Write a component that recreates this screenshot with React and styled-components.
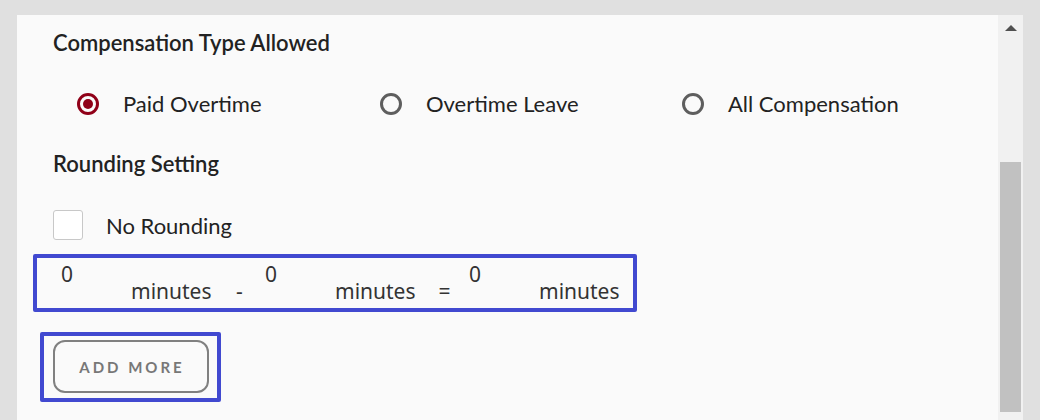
import styled, { createGlobalStyle } from 'styled-components';

const GlobalStyle = createGlobalStyle`
  html, body {
    margin: 0;
    height: 420px;
    overflow: hidden;
    background: #e0e0e0;
    font-family: Lato, "Liberation Sans", sans-serif;
  }
`;

const Frame = styled.div`
  padding: 15px 17px 0 17px;
  height: 405px;
`;

const Panel = styled.div`
  display: flex;
  height: 100%;
  background: #fafafa;
`;

const Content = styled.div`
  flex: 1;
  padding: 15px 0 0 36px;
`;

const Heading = styled.h3`
  margin: 0;
  font-size: 22px;
  line-height: 26px;
  font-weight: 600;
  color: #222;
`;

const RadioGroup = styled.div`
  display: grid;
  grid-template-columns: 303px 302px 300px;
  margin: 35px 0 34px 24px;
`;

const RadioOption = styled.label`
  display: flex;
  align-items: center;
  font-size: 22px;
  line-height: 26px;
  color: #222;
`;

const RadioCircle = styled.span`
  box-sizing: border-box;
  width: 22px;
  height: 22px;
  border-radius: 50%;
  border: 3px solid ${(p) => (p.$checked ? '#900018' : '#5e5e5e')};
  margin-right: 24px;
  display: flex;
  align-items: center;
  justify-content: center;
  &::after {
    content: '';
    width: 10px;
    height: 10px;
    border-radius: 50%;
    background: ${(p) => (p.$checked ? '#900018' : 'transparent')};
  }
`;

const CheckRow = styled.label`
  display: flex;
  align-items: center;
  margin-top: 33px;
  font-size: 22px;
  color: #222;
`;

const CheckBox = styled.span`
  box-sizing: border-box;
  width: 30px;
  height: 30px;
  border: 1px solid #c8c8c8;
  border-radius: 3px;
  background: #fff;
  margin-right: 23px;
`;

const Highlight = styled.div`
  box-sizing: border-box;
  border: 4px solid #4149d0;
  border-radius: 2px;
  margin-left: ${(p) => p.$offset}px;
  width: ${(p) => p.$width}px;
`;

const RangeRow = styled.div`
  display: flex;
  height: 50px;
  padding-left: 24px;
  font-family: "Noto Sans", "Open Sans", sans-serif;
  font-size: 21px;
  color: #333;
`;

const Value = styled.span`
  width: 70px;
  align-self: flex-start;
  padding-top: 2px;
`;

const Unit = styled.span`
  width: 79px;
  align-self: flex-end;
  padding-bottom: 3px;
  white-space: nowrap;
`;

const Sep = styled.span`
  box-sizing: border-box;
  width: 55px;
  text-align: center;
  align-self: flex-end;
  padding-bottom: 3px;
  padding-left: ${(p) => p.$shift || 0}px;
`;

const ButtonWrap = styled.div`
  padding: 4px 8px 5px 9px;
`;

const AddButton = styled.button`
  box-sizing: border-box;
  width: 156px;
  height: 53px;
  border: 2px solid #808080;
  border-radius: 12px;
  background: transparent;
  color: #777;
  font-family: Lato, "Liberation Sans", sans-serif;
  font-weight: 700;
  font-size: 15px;
  letter-spacing: 3px;
  padding: 0 0 0 2px;
`;

const Scrollbar = styled.div`
  width: 25px;
  background: #f1f1f1;
  display: flex;
  flex-direction: column;
  align-items: center;
`;

const Arrow = styled.span`
  margin-top: 10px;
  width: 0;
  height: 0;
  border-left: 6px solid transparent;
  border-right: 6px solid transparent;
  border-bottom: 6px solid #505050;
`;

const Thumb = styled.div`
  margin-top: 131px;
  width: 21px;
  height: 250px;
  background: #c1c1c1;
`;

const RangeGroup = ({ sep }) => (
  <>
    <Value>0</Value>
    <Unit>minutes</Unit>
    {sep && <Sep $shift={sep === '=' ? 6 : 4}>{sep}</Sep>}
  </>
);

export default function App() {
  const options = ['Paid Overtime', 'Overtime Leave', 'All Compensation'];
  return (
    <>
      <GlobalStyle />
      <Frame>
        <Panel>
          <Content>
            <Heading>Compensation Type Allowed</Heading>
            <RadioGroup>
              {options.map((o, i) => (
                <RadioOption key={o}>
                  <RadioCircle $checked={i === 0} />
                  {o}
                </RadioOption>
              ))}
            </RadioGroup>
            <Heading>Rounding Setting</Heading>
            <CheckRow>
              <CheckBox />
              No Rounding
            </CheckRow>
            <Highlight $offset={-20} $width={604} style={{ marginTop: 14 }}>
              <RangeRow>
                <RangeGroup sep="-" />
                <RangeGroup sep="=" />
                <RangeGroup />
              </RangeRow>
            </Highlight>
            <Highlight $offset={-13} $width={181} style={{ marginTop: 20 }}>
              <ButtonWrap>
                <AddButton>ADD MORE</AddButton>
              </ButtonWrap>
            </Highlight>
          </Content>
          <Scrollbar>
            <Arrow />
            <Thumb />
          </Scrollbar>
        </Panel>
      </Frame>
    </>
  );
}
